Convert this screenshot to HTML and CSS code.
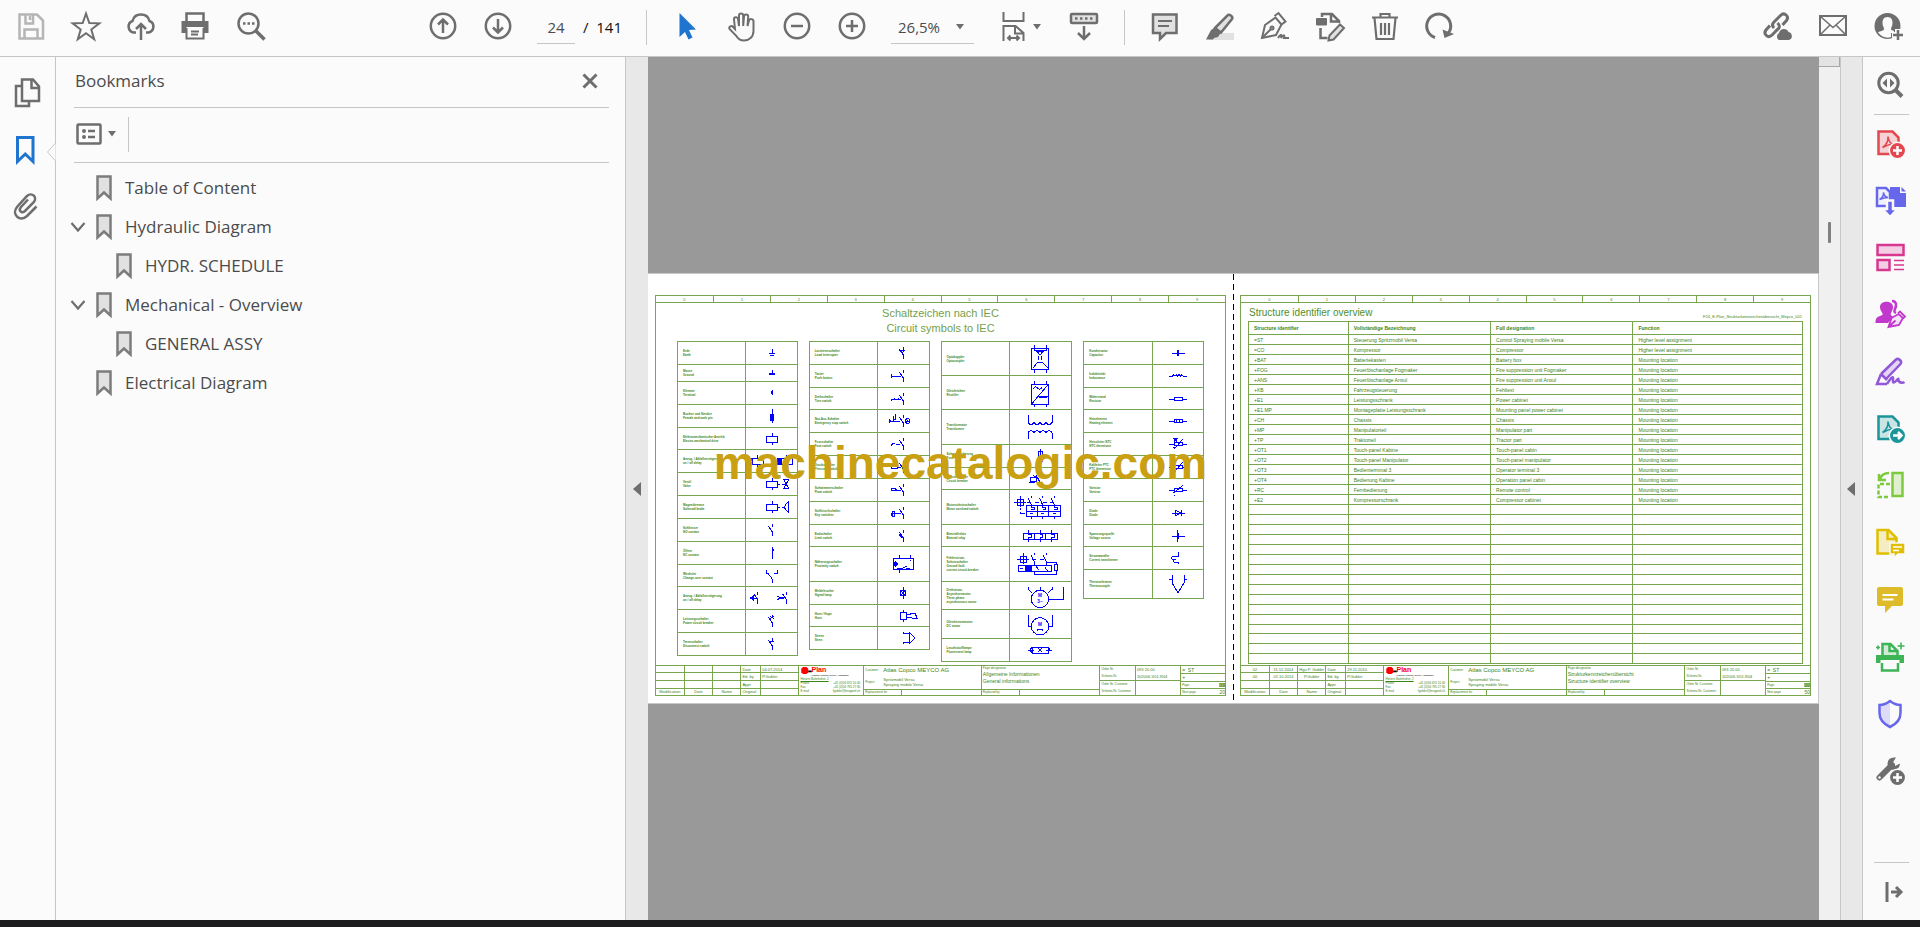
FILE: index.html
```html
<!DOCTYPE html>
<html lang="en">
<head>
<meta charset="utf-8">
<title>Document viewer</title>
<link rel="stylesheet" href="styles.css">
</head>
<body>
<svg class="defs" aria-hidden="true">
  <symbol id="bm" viewBox="0 0 16 26"><path d="M1.5 1.5h13v22l-6.500-6-6.500 6z" fill="#e1e1e1" stroke="#7c7c7c" stroke-width="2.500"/></symbol>
  <symbol id="chev" viewBox="0 0 16 12"><path d="M1.500 2l6.500 7.500L14.500 2" fill="none" stroke="#6e6e6e" stroke-width="2.200"/></symbol>
  <symbol id="caret" viewBox="0 0 8 6"><path d="M0 0h8L4 5.500z" fill="#6e6e6e"/></symbol>
  <g id="no"><path d="M0-17v9M-12-13L0 4v13"/></g>
</svg>

<header class="toolbar">
  <div class="group">
    <button class="tool dim" aria-label="Save"><svg class="ic" viewBox="0 0 30 30"><path d="M3.500 2.500h17.500l6 6V26.500H3.500z"/><path d="M9.500 3v8.500h7.500V3M8.500 26v-8.500h13V26"/><path d="M14 4v4"/></svg></button>
    <button class="tool" aria-label="Star"><svg class="ic thin" viewBox="0 0 30 30"><path d="M15 1.500l3.300 9.500 10 .3-8 6.200 2.900 9.700L15 21.300l-8.200 5.900 2.900-9.700-8-6.200 10-.3z"/></svg></button>
    <button class="tool" aria-label="Upload"><svg class="ic" viewBox="0 0 30 30"><path d="M10 20.500H7.500a6 6 0 0 1-1-11.500C7.500 5 10.500 2.500 15 2.500s7.500 2.500 8.500 6.500a6 6 0 0 1-1 11.500H20M15 28V12.500M10 17l5-5 5 5"/></svg></button>
    <button class="tool" aria-label="Print"><svg class="ic" viewBox="0 0 30 30"><path d="M5.500 9V1.500h17V9"/><path d="M.5 9h27v12h-5v-6h-17v6h-5z" fill="currentColor" stroke="none"/><path d="M5.500 16v10.500h17V16M10 19.500h8M10 22.500h7" stroke-width="2"/></svg></button>
    <button class="tool" aria-label="Find"><svg class="ic" viewBox="0 0 30 30"><circle cx="12.500" cy="11.500" r="10"/><path d="M20 19l8.500 8.500" stroke-width="3.500"/><path d="M7 11.500h2.500M11.500 11.500H14M16 11.500h2.500"/></svg></button>
  </div>
  <div class="group middle">
    <button class="tool" aria-label="Previous page"><svg class="ic" viewBox="0 0 30 30"><circle cx="15" cy="14" r="12.200"/><path d="M15 21V8M10 12.500l5-5 5 5"/></svg></button>
    <button class="tool" aria-label="Next page"><svg class="ic" viewBox="0 0 30 30"><circle cx="15" cy="14" r="12.200"/><path d="M15 7v13M10 15.500l5 5 5-5"/></svg></button>
    <div class="pager"><input class="page-no" type="text" value="24" aria-label="Page number"><span class="total">/&nbsp; 141</span></div>
    <span class="rule"></span>
    <button class="tool" aria-label="Select"><svg viewBox="0 0 30 30"><path d="M7.500 1v24l5.500-5 3.500 7.500 4-2L17 18l7-.5z" fill="#1f74cf"/></svg></button>
    <button class="tool" aria-label="Pan"><svg class="ic hand" viewBox="0 0 30 30"><path d="M8 17L7 7.500a2 2 0 0 1 4-.5l1 7V3.500a2 2 0 0 1 4.200 0V14l.8-9.500a2 2 0 0 1 4.200 0L20.500 14l1.500-5.500c.8-2 4.500-2 4.500 1V19c0 6-4.500 9.500-9.500 9.500-4 0-6-1.500-8-5L2.500 17c-1-2.500 2-4 3.500-2z"/></svg></button>
    <button class="tool" aria-label="Zoom out"><svg class="ic" viewBox="0 0 30 30"><circle cx="15" cy="14" r="12.200"/><path d="M9 14h12"/></svg></button>
    <button class="tool" aria-label="Zoom in"><svg class="ic" viewBox="0 0 30 30"><circle cx="15" cy="14" r="12.200"/><path d="M9 14h12M15 8v12"/></svg></button>
    <button class="zoom" aria-label="Zoom level">26,5%<svg class="caret"><use href="#caret"/></svg></button>
    <button class="tool fit" aria-label="Fit width"><svg class="ic" viewBox="0 0 30 30"><path d="M5.500 0v9h20V0M5.500 29V14h12l8 7v8M17 14.500v7h8M10 26h11M12.500 23.500L10 26l2.500 2.500M18.500 23.500L21 26l-2.500 2.500" stroke-width="2"/></svg><svg class="caret"><use href="#caret"/></svg></button>
    <button class="tool" aria-label="Scrolling"><svg class="ic" viewBox="0 0 30 30"><rect x="2" y="2" width="26" height="9" rx="1" fill="#e1e1e1"/><path d="M6 6.500h2.500M11 6.500h2.500M16 6.500h2.500M21 6.500h2.500"/><path d="M15 14v12.500M9 21l6 6 6-6"/></svg></button>
    <span class="rule"></span>
    <button class="tool" aria-label="Comment"><svg class="ic" viewBox="0 0 30 30"><path d="M3 2.500h23.500V21H16l-6 6v-6H3z" fill="#e1e1e1"/><path d="M8 9h14M8 14h11" stroke-width="2"/></svg></button>
    <button class="tool" aria-label="Highlight"><svg class="ic" viewBox="0 0 30 30"><path d="M10 21h19v7H4z" fill="#e1e1e1" stroke="none"/><path d="M10 16L22.500 3.500c1.500-2 6 1 4.500 3.500L16 20.500z" fill="#e1e1e1"/><path d="M6 18l4-2.500 6 5-3 4.500-4 1-1 1.500H1z" fill="currentColor" stroke="none"/></svg></button>
    <button class="tool" aria-label="Sign"><svg class="ic thin" viewBox="0 0 30 30"><path d="M2 26l3-13L15.500 5.500l6 7L16 23z"/><path d="M14.500 4l4-3 7 8.500-4 3M2 26l9-9"/><circle cx="12" cy="16" r="1.500"/><path d="M18 26c3-5 4-3 3 0 3-4 4-3 3 0h5"/></svg></button>
    <button class="tool" aria-label="Edit"><svg class="ic" viewBox="0 0 30 30"><path d="M7 5V2h10l7 7v2M16 2v7.500h8M5.500 16v10h7"/><rect x="1" y="6" width="11" height="7.500" rx="1" fill="currentColor" stroke="none"/><path d="M14.500 23.500L25 12.500l4 3.500-10.500 11.500-5 1z" fill="#e1e1e1" stroke-width="2"/></svg></button>
    <button class="tool" aria-label="Delete"><svg class="ic" viewBox="0 0 30 30"><path d="M2 5.500h26M10.500 5V2h9v3M4.500 6l2 21h17l2-21M11 11v12M15 11v12M19 11v12" stroke-width="2.200"/></svg></button>
    <button class="tool" aria-label="Rotate"><svg class="ic" viewBox="0 0 30 30"><path d="M10 25.500A12 12 0 1 1 23.500 21" stroke-width="3"/><path d="M17.500 17.500L29 22l-9.500 4z" fill="currentColor" stroke="none"/></svg></button>
  </div>
  <div class="group right">
    <button class="tool" aria-label="Share link"><svg class="ic" viewBox="0 0 30 30"><path d="M11 16c-3-3-1-5 0-6l6.500-6.500c4-4 9 1 6 5L19.500 13M14.500 11c3 3 2 5 0 6.500L9 23c-4 4-9-1-6-5l4-4.500" stroke-width="3"/><path d="M16 28a4 4 0 0 1 0-7c1-5 8-5 9.500-1 4 0 5 8 0 8z" fill="currentColor" stroke="none"/></svg></button>
    <button class="tool" aria-label="Mail"><svg class="ic thin" viewBox="0 0 30 30"><rect x="2" y="4" width="26" height="19"/><path d="M2.500 4.500L15 15.500 27.500 4.500M2.500 22.500L12 13M27.500 22.500L18 13" stroke-width="1.500"/></svg></button>
    <button class="tool" aria-label="Account"><svg class="ic" viewBox="0 0 30 30"><circle cx="14.500" cy="14" r="13" fill="currentColor" stroke="none"/><path d="M14.500 5c-4 0-5 3-5 6 0 3 1.500 4 1.500 6 0 2-4 2-6 3.500 4 5 9 6 13 4.500v-4h3v-2c-2-.5-3-1-3-2 0-2 1.500-3 1.500-6s-1-6-5-6z" fill="#fbfbfb" stroke="none"/><path d="M25 17v12M19 23h12" stroke="#fbfbfb" stroke-width="6"/><path d="M25 18v10M20 23h10"/></svg></button>
  </div>
</header>

<main class="work">
  <nav class="rail" aria-label="Panels">
    <button class="side" aria-label="Pages"><svg class="ic" viewBox="0 0 30 30"><path d="M9.500 8H4v20h13v-4"/><path d="M10 1.500h11l6 7v14.500H10zM19.500 2v8H27" fill="#fbfbfb"/></svg></button>
    <button class="side active" aria-label="Bookmarks"><svg class="ic bold" viewBox="0 0 30 30"><path d="M5.500 2.500H21v24l-7.750-7.500L5.500 26.500z"/></svg></button>
    <button class="side" aria-label="Attachments"><svg class="ic" viewBox="0 0 30 30"><path d="M24.500 14.500L15 24c-7 6.500-16-1.500-10-9L15 4c5-4.500 11 1.500 6.500 6.500L13 19c-3.500 3-7-.5-4-4l7-7.500"/></svg></button>
    <svg class="notch" viewBox="0 0 10 20"><path d="M9.500 0v1L1.500 10l8 9v1" fill="#fbfbfb" stroke="#c6c6c6"/></svg>
  </nav>

  <aside class="panel">
    <div class="panel-head"><h2>Bookmarks</h2><button class="close" aria-label="Close"><svg class="ic bold" viewBox="0 0 16 16"><path d="M1.500 1.500l13 13M14.500 1.500l-13 13"/></svg></button></div>
    <div class="panel-tools">
      <button class="options" aria-label="Options"><svg class="ic" viewBox="0 0 26 22"><rect x="1.500" y="1.500" width="23" height="19" rx="1"/><path d="M12 8h7M12 14h7"/><circle cx="8" cy="8" r="2" fill="currentColor" stroke="none"/><circle cx="8" cy="14" r="2" fill="currentColor" stroke="none"/></svg><svg class="caret"><use href="#caret"/></svg></button>
    </div>
    <ul class="tree">
      <li><span class="tw"></span><svg class="mark"><use href="#bm"/></svg><a href="#toc">Table of Content</a></li>
      <li><button class="tw" aria-label="Collapse"><svg><use href="#chev"/></svg></button><svg class="mark"><use href="#bm"/></svg><a href="#hyd">Hydraulic Diagram</a></li>
      <li class="child"><span class="tw"></span><svg class="mark"><use href="#bm"/></svg><a href="#sch">HYDR. SCHEDULE</a></li>
      <li><button class="tw" aria-label="Collapse"><svg><use href="#chev"/></svg></button><svg class="mark"><use href="#bm"/></svg><a href="#mech">Mechanical - Overview</a></li>
      <li class="child"><span class="tw"></span><svg class="mark"><use href="#bm"/></svg><a href="#assy">GENERAL ASSY</a></li>
      <li><span class="tw"></span><svg class="mark"><use href="#bm"/></svg><a href="#el">Electrical Diagram</a></li>
    </ul>
  </aside>

  <button class="gutter left" aria-label="Hide left pane"><svg viewBox="0 0 8 14"><path d="M8 0v14L0 7z"/></svg></button>

  <section class="canvas">
    <div class="spread">
      <article class="page">
        <div class="sheet">
          <ol class="ruler"><li>0</li><li>1</li><li>2</li><li>3</li><li>4</li><li>5</li><li>6</li><li>7</li><li>8</li><li>9</li></ol>
          <h1 class="caption">Schaltzeichen nach IEC<br>Circuit symbols to IEC</h1>
          <div class="tables">
            <table class="symbols a">
              <tr><td>Erde<br>Earth<td><svg class="s" viewBox="-72 -30 144 60"><path d="M0-13V0M-9 0H9M-6 7H6"/></svg>
              <tr class="h17"><td>Masse<br>Ground<td><svg class="s" viewBox="-72 -24 144 48"><path d="M0-10V4M-9 1H9M-9 4H9"/></svg>
              <tr><td>Klemme<br>Terminal<td><svg class="s" viewBox="-72 -30 144 60"><path d="M0-10V5"/><circle cy="-1" r="3"/></svg>
              <tr><td>Buchse und Stecker<br>Female and male pin<td><svg class="s" viewBox="-72 -30 144 60"><path d="M0-20V22"/><path class="f" d="M-5-4h10v16h-10z"/></svg>
              <tr class="h22"><td>Elektromechanischer Antrieb<br>Electro-mechanical drive<td><svg class="s" viewBox="-72 -30 144 60"><path d="M-17-9h34V10h-34zM0-19v10M0 10v9"/></svg>
              <tr><td>Anzug- / Abfallverzögerung<br>on / off delay<td><svg class="s" viewBox="-72 -30 144 60"><path d="M-58-7h32V10h-32zM-43-17v10M-43 10v9M-70-7h12V10h-12zl12 17M-58-7l-12 17M28-7h34V10h-34zM43-17v10M43 10v9"/><path class="f" d="M15-7h13V10h-13z"/></svg>
              <tr><td>Ventil<br>Valve<td><svg class="s" viewBox="-72 -30 144 60"><path d="M-17-9h34V10h-34zM0-19v10M0 10v9M17 0h8M30 0h8M35-13h15L35 13h15z"/></svg>
              <tr><td>Magnetbremse<br>Solenoid brake<td><svg class="s" viewBox="-72 -30 144 60"><path d="M-17-9h34V10h-34zM0-19v10M0 10v9M17 0h8M29 0h8M48-14q-20 14 0 28z"/></svg>
              <tr><td>Schliesser<br>NO contact<td><svg class="s" viewBox="-72 -30 144 60"><use href="#no"/></svg>
              <tr><td>Öffner<br>NC contact<td><svg class="s" viewBox="-72 -30 144 60"><path d="M0-18v9h6M4-12L0 4v15"/></svg>
              <tr class="h22"><td>Wechsler<br>Change-over contact<td><svg class="s" viewBox="-72 -30 144 60"><path d="M-17-18v9h9M-12-8L0 8v12M17-18v9H7"/></svg>
              <tr><td>Anzug- / Abfallverzögerung<br>on / off delay<td><svg class="s" viewBox="-72 -30 144 60"><use href="#no" x="-43"/><use href="#no" x="43"/><path d="M-66 0h18M-58-5v10M16-6l8 6-8 6M22-2h14M22 2h14"/><path class="f" d="M-64 0l8-6v12z"/></svg>
              <tr><td>Leistungsschalter<br>Power circuit breaker<td><svg class="s" viewBox="-72 -30 144 60"><use href="#no"/><path d="M-6-13l12 6M6-13l-12 6"/></svg>
              <tr><td>Trennschalter<br>Disconnect switch<td><svg class="s" viewBox="-72 -30 144 60"><use href="#no"/><path d="M-7-8H6"/></svg>
            </table>
            <table class="symbols b">
              <tr><td>Lasttrennschalter<br>Load interrupter<td><svg class="s" viewBox="-72 -30 144 60"><use href="#no"/><path d="M-10-8H5L-2 0z"/></svg>
              <tr><td>Taster<br>Push button<td><svg class="s" viewBox="-72 -30 144 60"><use href="#no"/><path d="M-36-7V7M-36 0h30"/></svg>
              <tr class="h22"><td>Drehschalter<br>Turn switch<td><svg class="s" viewBox="-72 -30 144 60"><use href="#no"/><path d="M-36 5V0h29M-26-3v6M-14-4v4"/></svg>
              <tr><td>Not-Aus-Schalter<br>Emergency stop switch<td><svg class="s" viewBox="-72 -30 144 60"><use href="#no"/><path d="M-42-7V7M-42 0h34M-38-4v8M-30 0v-14M-22-20v14h-8"/><circle cx="14" r="7"/><path d="M10 0h8M14-4v8"/></svg>
              <tr><td>Fussschalter<br>Foot switch<td><svg class="s" viewBox="-72 -30 144 60"><use href="#no"/><path d="M-36 4l5-5h8M-20 0h12M-26-4v5"/></svg>
              <tr><td>Druckschalter<br>Pressure switch<td><svg class="s" viewBox="-72 -30 144 60"><use href="#no"/><path d="M-36-4h18V5h-18zM-18 1h12"/></svg>
              <tr><td>Schwimmerschalter<br>Float switch<td><svg class="s" viewBox="-72 -30 144 60"><use href="#no"/><path d="M-36 0h30M-28-5q8 0 8 7h-16q0-7 8-7z"/></svg>
              <tr><td>Schlüsselschalter<br>Key switches<td><svg class="s" viewBox="-72 -30 144 60"><use href="#no"/><path d="M-36 9v-7h30M-26 9V-4h-6v13z"/></svg>
              <tr class="h22"><td>Endschalter<br>Limit switch<td><svg class="s" viewBox="-72 -30 144 60"><use href="#no"/><path d="M-12-4l8 8V-4"/></svg>
              <tr class="h35"><td>Näherungsschalter<br>Proximity switch<td><svg class="t" viewBox="-72 -45 144 90"><path d="M-30-17H30V16H-30zM-12-26v9M22-26v9M-12 16v10M-18 12H0l12-6M10 12h10M22-8v-4"/><path class="f" d="M-22-8l7 8-7 8-7-8z"/></svg>
              <tr><td>Meldeleuchte<br>Signal lamp<td><svg class="s" viewBox="-72 -30 144 60"><circle r="9"/><path d="M0-19V19M-6-6L6 6M6-6L-6 6"/></svg>
              <tr class="h22"><td>Horn / Hupe<br>Horn<td><svg class="s" viewBox="-72 -30 144 60"><path d="M-9-10H9V10H-9zM0-19v9M0 10v9M9-3l27-6 7 17L9 4"/></svg>
              <tr><td>Sirene<br>Siren<td><svg class="s" viewBox="-72 -30 144 60"><path d="M0-18v5h19M0 18v-5h19M19-17V17L35 0z"/></svg>
            </table>
            <table class="symbols c">
              <tr class="h34"><td>Optokoppler<br>Optocoupler<td><svg class="w t" viewBox="-90 -45 180 90"><path d="M-26-31H25V30H-26zM-17-43v18h36v-18M-17 43V30M19 43V30M-10-24h20L0-12zM-5-8v12M5-8v12M-20 26l12-16H8l14 16"/></svg>
              <tr class="h34"><td>Gleichrichter<br>Rectifier<td><svg class="w t" viewBox="-90 -45 180 90"><path d="M-26-26H25V34H-26zl0 60L25-26M-17-36v10M19-36v10M-17 43v-9M19 43v-9M-20-13q7-10 13-2t13-2M-6 10h30M-2 14h24"/></svg>
              <tr class="h35"><td>Transformator<br>Transformer<td><svg class="w t" viewBox="-90 -45 180 90"><path d="M-36-35v22q9 12 18 0 9 12 18 0 9 12 18 0 9 12 18 0v-22M-36 37V17q9-12 18 0 9-12 18 0 9-12 18 0 9-12 18 0v20"/></svg>
              <tr><td>Schmelzsicherung<br>Fuse<td><svg class="w s" viewBox="-90 -30 180 60"><path d="M-6-15H6V15H-6zM0-22V22"/></svg>
              <tr class="h22"><td>Schutzschalter<br>Circuit breaker<td><svg class="w s" viewBox="-90 -30 180 60"><path d="M-30-6h18v12h-18zM-8-4L0 10M-12-12l8 14M-34 10h20M-20-10L-4 0"/></svg>
              <tr class="h35"><td>Motorschutzschalter<br>Motor overload switch<td><svg class="w t" viewBox="-90 -45 180 90"><path d="M-41-6H60V29H-41zM-41 12H60M-8-6v35M25-6v35M-26-34v6M8-34v6M43-34v6M-36-28l10 22M-2-28L8-6M33-28L43-6M-26-6v6h8v8h-8M8-6v6h8v8H8M43-6v6h8v8h-8M-26 29v8M8 29v8M43 29v8M-30 20h8M4 20h8M39 20h8M-69-24h18v18h-18zM-78-15h36M-60-32V0M-38-15h12M-14-15h12M10-15h12M30-15h10M-60 4v6M-60 16v4h16"/></svg>
              <tr class="h22"><td>Bimetallrelais<br>Bimetal relay<td><svg class="w s" viewBox="-90 -30 180 60"><path d="M-51-9H51V9H-51zM-17-9V9M17-9V9M-35-19v15h8v8h-8v15M0-19v15h8v8H0v15M35-19v15h8v8h-8v15"/></svg>
              <tr class="h35"><td>Fehlerstrom-<br>Schutzschalter<br>Ground fault<br>current circuit-breaker<td><svg class="w t" viewBox="-90 -45 180 90"><path d="M-66 5H33V22H-66zM-18-34v6M18-34v6M-28-28L-18-8V5M8-28L18-8V5M18-4h30V2M43 2h10v16H43zM-18 22v10h66V18M-12 5l8 14M14 8l8 12M-60 14h10M-60-24h18v18h-18zM-69-15h36M-51-32V0M-24-15h12M0-15h12"/><path class="f" d="M-44 5h17v17h-17z"/></svg>
              <tr class="h28"><td>Drehstrom-<br>Asynchronmotor<br>Three-phase<br>asynchronous motor<td><svg class="w m" viewBox="-90 -39 180 78"><circle cy="9" r="26"/><path d="M-36-28v8l13 12M0-28v11M36-28v8L23-8M70-28V9H27"/><text y="4">M</text><text y="22">3~</text></svg>
              <tr class="h29"><td>Gleichstrommotor<br>DC motor<td><svg class="w m" viewBox="-90 -39 180 78"><circle cy="7" r="26"/><path d="M-36-28V7h10M36-28V7H26M-9 17H9M-9 20h4M5 20h4"/><text y="5">M</text></svg>
              <tr><td>Leuchtstofflampe<br>Fluorescent lamp<td><svg class="w s" viewBox="-90 -30 180 60"><path d="M-24-9h48v18h-48zM-36 0h18M18 0h18M-6-6L6 6M6-6L-6 6M-24-9q-8 9 0 18M24-9q8 9 0 18"/></svg>
            </table>
            <table class="symbols d">
              <tr><td>Kondensator<br>Capacitor<td><svg class="s" viewBox="-72 -30 144 60"><path d="M-18 0H20M-2-9V9M1-9V9"/></svg>
              <tr><td>Induktivität<br>Inductance<td><svg class="s" viewBox="-72 -30 144 60"><path d="M-27 0h10l4-4 4 4 4-4 4 4 4-4 4 4 4-4 4 4h11"/></svg>
              <tr class="h22"><td>Widerstand<br>Resistor<td><svg class="s" viewBox="-72 -30 144 60"><path d="M-27 0h15M12 0h15M-12-4h24v8h-24z"/></svg>
              <tr><td>Heizelement<br>Heating element<td><svg class="s" viewBox="-72 -30 144 60"><path d="M-27 0h15M12 0h15M-12-5h24V5h-24zM-5-5V5M4-5V5"/></svg>
              <tr><td>Heissleiter NTC<br>NTC thermistor<td><svg class="s" viewBox="-72 -30 144 60"><path d="M-27 0h15M12 0h15M-12-5h24V5h-24zM-10 14l24-28M-14-17H0M-12-17v10l8-8v8M-16 10h8"/></svg>
              <tr><td>Kaltleiter PTC<br>PTC thermistor<td><svg class="s" viewBox="-72 -30 144 60"><path d="M-27 0h15M12 0h15M-12-5h24V5h-24zM-10 14l24-28M-14 14h8"/></svg>
              <tr><td>Varistor<br>Varistor<td><svg class="s" viewBox="-72 -30 144 60"><path d="M-27 0h15M12 0h15M-12-5h24V5h-24zM-14 9L14-13M-11 14v4"/></svg>
              <tr><td>Diode<br>Diode<td><svg class="s" viewBox="-72 -30 144 60"><path d="M-18 0H20M-8-9L8 0-8 9zM9-9V9"/></svg>
              <tr class="h22"><td>Spannungsquelle<br>Voltage source<td><svg class="s" viewBox="-72 -30 144 60"><path d="M-18 0H20M-2-18V18M2-8V8"/></svg>
              <tr><td>Stromwandler<br>Current transformer<td><svg class="s" viewBox="-72 -30 144 60"><path d="M2-17v12h-18q-8 6 0 10h6q-8 5 0 8H2v5"/></svg>
              <tr class="h29"><td>Thermoelement<br>Thermocouple<td><svg class="m" viewBox="-72 -39 144 78"><path d="M-18-26v23L0 26 18-3v-23M-27-14h9M18-14h9"/></svg>
            </table>
          </div>
          <footer class="block">
            <table class="revs">
              <tr><td><td><td><td class="l">Date<td class="l">04.07.2014
              <tr><td><td><td><td class="l">Ed. by<td class="l">P.Gubler
              <tr><td><td><td><td class="l">Appr<td>
              <tr><td>Modification<td>Date<td>Name<td class="l">Original<td>
            </table>
            <div class="logo"><svg viewBox="0 0 12 8"><path d="M2 0h4l2 2v4L6 8H2L0 6V2z" fill="#f00"/><path d="M8 5h4" stroke="#000" stroke-width="2"/></svg><b>Plan</b><i>Planung, Prüfung, Service, Automation</i><p><u>Hintere Bahnhofstr. 2</u></p><p><span>Phone</span><span>+41 (0)56 670 10 40</span></p><p><span>Fax</span><span>+41 (0)56 795 27 80</span></p><p><span>E-mail</span><span>fgubler@brugweil.ch</span></p></div>
            <div class="job"><div class="job-main"><span>Customer</span><b>Atlas Copco MEYCO AG</b><span>Project</span><em>Spritzmobil Versa<br>Spraying mobile Versa</em></div><div class="foot"><span>Replacement for</span><span></span></div></div>
            <div class="job"><div class="desc"><span>Page designation</span><strong>Allgemeine Informationen<br>General informations</strong></div><div class="foot"><span>Replaced by</span><span></span></div></div>
            <div class="orders"><div>Order Nr.<br>Schema Nr.</div><div class="num">093 20 00<br>102006-V01-R04</div><div>Order Nr. Customer<br>Schema Nr. Customer</div><div></div></div>
            <div class="sheetno"><div class="num">=&nbsp; ST</div><div class="num">+</div><div><span>Page</span><b class="num hit">19</b></div><div><span>Next page</span><b class="num">20</b></div></div>
          </footer>
        </div>
      </article>

      <article class="page second">
        <div class="sheet">
          <ol class="ruler"><li>0</li><li>1</li><li>2</li><li>3</li><li>4</li><li>5</li><li>6</li><li>7</li><li>8</li><li>9</li></ol>
          <div class="overview-head"><h1>Structure identifier overview</h1><span>F24_E-Plan_Strukturkennzeichenübersicht_Meyco_001</span></div>
          <table class="overview">
            <thead><tr><th>Structure identifier<th>Vollständige Bezeichnung<th>Full designation<th>Function</thead>
            <tbody>
              <tr><td>=ST<td>Steuerung Spritzmobil Versa<td>Control Spraying mobile Versa<td>Higher level assignment
              <tr><td>=CO<td>Kompressor<td>Compressor<td>Higher level assignment
              <tr><td>+BAT<td>Batteriekasten<td>Battery box<td>Mounting location
              <tr><td>+FOG<td>Feuerlöschanlage Fogmaker<td>Fire suppression unit Fogmaker<td>Mounting location
              <tr><td>+ANS<td>Feuerlöschanlage Ansul<td>Fire suppression unit Ansul<td>Mounting location
              <tr><td>+KB<td>Fahrzeugsteuerung<td>Fehltext<td>Mounting location
              <tr><td>+E1<td>Leistungsschrank<td>Power cabinet<td>Mounting location
              <tr><td>+E1.MP<td>Montageplatte Leistungsschrank<td>Mounting panel power cabinet<td>Mounting location
              <tr><td>+CH<td>Chassis<td>Chassis<td>Mounting location
              <tr><td>+MP<td>Manipulatorteil<td>Manipulator part<td>Mounting location
              <tr><td>+TP<td>Traktorteil<td>Tractor part<td>Mounting location
              <tr><td>+OT1<td>Touch-panel Kabine<td>Touch-panel cabin<td>Mounting location
              <tr><td>+OT2<td>Touch-panel Manipulator<td>Touch-panel manipulator<td>Mounting location
              <tr><td>+OT3<td>Bedienterminal 3<td>Operator terminal 3<td>Mounting location
              <tr><td>+OT4<td>Bedienung Kabine<td>Operation panel cabin<td>Mounting location
              <tr><td>+RC<td>Fernbedienung<td>Remote control<td>Mounting location
              <tr><td>+E2<td>Kompressorschrank<td>Compressor cabinet<td>Mounting location
              <tr><td><td><td><td><tr><td><td><td><td><tr><td><td><td><td><tr><td><td><td><td>
              <tr><td><td><td><td><tr><td><td><td><td><tr><td><td><td><td><tr><td><td><td><td>
              <tr><td><td><td><td><tr><td><td><td><td><tr><td><td><td><td><tr><td><td><td><td>
              <tr class="h9"><td><td><td><td><tr><td><td><td><td><tr><td><td><td><td><tr><td><td><td><td>
            </tbody>
          </table>
          <footer class="block">
            <table class="revs">
              <tr><td>02<td>11.12.2014<td>Hgu P. Gubler<td class="l">Date<td class="l">29.11.2010
              <tr><td>00<td>01.10.2014<td>P.Gubler<td class="l">Ed. by<td class="l">P.Gubler
              <tr><td><td><td><td class="l">Appr<td>
              <tr><td>Modification<td>Date<td>Name<td class="l">Original<td>
            </table>
            <div class="logo"><svg viewBox="0 0 12 8"><path d="M2 0h4l2 2v4L6 8H2L0 6V2z" fill="#f00"/><path d="M8 5h4" stroke="#000" stroke-width="2"/></svg><b>Plan</b><i>Planung, Prüfung, Service, Automation</i><p><u>Hintere Bahnhofstr. 2</u></p><p><span>Phone</span><span>+41 (0)56 670 10 40</span></p><p><span>Fax</span><span>+41 (0)56 795 27 80</span></p><p><span>E-mail</span><span>fgubler@brugweil.ch</span></p></div>
            <div class="job"><div class="job-main"><span>Customer</span><b>Atlas Copco MEYCO AG</b><span>Project</span><em>Spritzmobil Versa<br>Spraying mobile Versa</em></div><div class="foot"><span>Replacement for</span><span></span></div></div>
            <div class="job"><div class="desc"><span>Page designation</span><strong>Strukturkennzeichenübersicht<br>Structure identifier overview</strong></div><div class="foot"><span>Replaced by</span><span></span></div></div>
            <div class="orders"><div>Order Nr.<br>Schema Nr.</div><div class="num">093 20 00<br>102006-V01-R04</div><div>Order Nr. Customer<br>Schema Nr. Customer</div><div></div></div>
            <div class="sheetno"><div class="num">=&nbsp; ST</div><div class="num">+</div><div><span>Page</span><b class="num hit">20</b></div><div><span>Next page</span><b class="num">50</b></div></div>
          </footer>
        </div>
      </article>
      <div class="watermark">machinecatalogic.com</div>
    </div>
  </section>

  <div class="scroll"><div class="thumb"></div><div class="grip"></div></div>
  <button class="gutter end" aria-label="Hide right pane"><svg viewBox="0 0 8 14"><path d="M8 0v14L0 7z"/></svg></button>

  <nav class="rail tools" aria-label="Tools">
    <button class="side" aria-label="Search tools"><svg class="ic bold" viewBox="0 0 30 30"><circle cx="12.500" cy="12" r="9.700"/><path d="M19.500 19l6.500 6.500" stroke-width="4"/><path d="M11 7.500v9L6.500 12zM14 7.500v9l4.500-4.500z" fill="currentColor" stroke="none"/></svg></button>
    <hr>
    <button class="side red" aria-label="Create PDF"><svg class="ic" viewBox="0 0 30 30"><path class="tint" d="M2.500 2.500h14l6 6V25h-20z"/><path d="M6.500 18.500q6-4 5.500-11 1 8 6.500 7.500-6 0-12 3.500" stroke-width="1.600"/><circle cx="21.500" cy="21.500" r="8.200" fill="currentColor" stroke="#fafafa" stroke-width="1.500"/><path d="M21.500 17v9M17 21.500h9" stroke="#fff"/></svg></button>
    <button class="side blue" aria-label="Export PDF"><svg class="ic" viewBox="0 0 30 30"><path d="M14 1h10v6h6v14H14z" fill="currentColor" stroke="none"/><path d="M25.500 1l4.500 4.500h-4.500z" fill="currentColor" stroke="none"/><path d="M1 2h9l4 4v14H1z" fill="#f0f0ff"/><path d="M3.500 13.500q4-2 4-7 1 5 4.500 5-4 0-8.500 2" stroke-width="1.500"/><path d="M11 14.500h6V23h4.500L14 31l-7.500-8H11z" fill="currentColor" stroke="#fafafa"/></svg></button>
    <button class="side pink" aria-label="Organize pages"><svg class="ic" viewBox="0 0 30 30"><rect class="tint" x="1.500" y="2" width="26" height="10"/><rect class="tint" x="1.500" y="17" width="12" height="10"/><path d="M18 17.500h10M18 22h10M18 26.500h10" stroke-width="1.500"/></svg></button>
    <button class="side magenta" aria-label="Request signatures"><svg class="ic" viewBox="0 0 30 30"><path d="M4 7c0-7 13-7 13 0 0 4-3 6-2 8l2 2-5 6H-.5c0-5 1-6 7-8 1-2-2.500-4-2.500-8z" fill="currentColor" stroke="none"/><path d="M16 1c5 0 4.500 5 3 8-1 2-1 3 1 4" stroke-width="2.500"/><path d="M12.500 27l3-9 7-4 4.500 4-4 7zM12.500 27l7-6.500M22 13.500l2-2 5 5-2 2" stroke-width="1.800" fill="#f7e0fb"/></svg></button>
    <button class="side violet" aria-label="Fill and sign"><svg class="ic" viewBox="0 0 30 30"><path class="tint" d="M5 17L20 2.500q2-1.500 4 .5t.5 4L10 22"/><path d="M5 17L1 27h10M5 17l6 6" /><path d="M11 27q7-11 6-4-.5 5 4 0 2-3 1.500 1 3 3 6 1"/></svg></button>
    <button class="side teal" aria-label="Send PDF"><svg class="ic" viewBox="0 0 30 30"><path class="tint" d="M2.500 2.500h14l6 6V25h-20z"/><path d="M6.500 18.500q6-4 5.500-11 1 8 6.500 7.500-6 0-12 3.500" stroke-width="1.600"/><circle cx="21.500" cy="21.500" r="8.200" fill="currentColor" stroke="#fafafa" stroke-width="1.500"/><path d="M17 21.500h8M22 18l3.500 3.500L22 25" stroke="#fff"/></svg></button>
    <button class="side lime" aria-label="Compare files"><svg class="ic" viewBox="0 0 30 30"><rect class="tint" x="16.500" y="2" width="10" height="23"/><path d="M14 13H2.500v13H14" stroke-dasharray="4 2"/><path d="M13 2q-7 0-9 6M3 3v6h7"/></svg></button>
    <button class="side gold" aria-label="PDF comments"><svg class="ic" viewBox="0 0 30 30"><path class="tint" d="M1.500 2h11l8 8v15.500h-19z"/><path d="M11.500 2.500V11h9"/><path d="M14 15h15v11h-7l-4 4v-4h-4z" fill="currentColor" stroke="#fafafa" stroke-width="1.500"/><path d="M17 19h9M17 22.500h6" stroke="#fff" stroke-width="1.500"/></svg></button>
    <button class="side gold2" aria-label="Comment"><svg class="ic" viewBox="0 0 30 30"><path d="M1 4q0-2 2-2h22q2 0 2 2v15q0 2-2 2H16l-7 7v-7H3q-2 0-2-2z" fill="currentColor" stroke="none"/><path d="M6.500 10h15M6.500 14.500h11" stroke="#fff" stroke-width="2"/></svg></button>
    <button class="side green" aria-label="Scan and print"><svg class="ic" viewBox="0 0 30 30"><path class="tint" d="M6.500 14V2h8l7 7v5M13.500 2v7h8"/><path d="M0 13h28v8h-4.500v-3h-19v3H0z" fill="currentColor" stroke="none"/><path d="M6 21v7.500h16V21"/><path d="M25 .5v7M21.500 4h7M2 3.500v4M0 5.500h4" stroke-width="1.500"/></svg></button>
    <button class="side blue" aria-label="Protect"><svg class="ic" viewBox="0 0 30 30"><path d="M14 2.500v25.500Q3.500 22 3.500 13V6Q9 6 14 2.500z" fill="#dcdcf8" stroke="none"/><path d="M14 2q5 4 10.500 4v8q0 9-10.500 14Q3.500 23 3.500 14V6Q9 6 14 2z"/></svg></button>
    <button class="side" aria-label="More tools"><svg class="ic" viewBox="0 0 30 30"><path d="M3.500 21.500L16 9" stroke-width="6" stroke-linecap="round"/><path d="M20 1.500q-8-1-8.500 6 0 6 6 6.500 6 0 6.500-6.500l-5 2.500-2.500-3z" fill="currentColor" stroke="none"/><circle cx="3.500" cy="21.500" r="1.200" fill="#fff" stroke="none"/><circle cx="21.500" cy="21.500" r="8.200" fill="currentColor" stroke="#fafafa" stroke-width="1.500"/><path d="M21.500 17v9M17 21.500h9" stroke="#fff"/></svg></button>
    <hr class="last">
    <button class="side" aria-label="Expand pane"><svg class="ic bold" viewBox="0 0 30 30"><path d="M11 5v20M15 15h9M20 10l5 5-5 5"/></svg></button>
  </nav>
</main>
<div class="taskbar"></div>
</body>
</html>
```

FILE: styles.css
```css
* { box-sizing: border-box; }
body {
  margin: 0;
  height: 100vh;
  display: flex;
  flex-direction: column;
  overflow: hidden;
  background: #fbfbfb;
  color: #4b4b4b;
  font-family: "Open Sans", "Noto Sans", sans-serif;
  font-size: 17px;
}
button { border: 0; padding: 0; background: none; color: inherit; font: inherit; display: flex; align-items: center; justify-content: center; }
h1, h2, ol, ul, p { margin: 0; padding: 0; font-weight: 400; list-style: none; }
.defs { position: absolute; width: 0; height: 0; }
.ic { fill: none; stroke: currentColor; stroke-width: 2.5; overflow: visible; }
.ic.thin, .ic.hand { stroke-width: 2; }
.ic.bold { stroke-width: 3; }
.caret { width: 8px; height: 6px; }

/* toolbar */
.toolbar { flex: none; display: flex; height: 57px; border-bottom: 1px solid #c6c6c6; padding: 0 5px 2px 3px; color: #6e6e6e; }
.group { display: flex; align-items: center; }
.middle { margin-left: 137px; }
.right { margin-left: auto; }
.tool { width: 55px; height: 54px; }
.tool svg:first-child { width: 30px; height: 30px; flex: none; }
.dim { color: #b5b5b5; }
.rule { width: 1px; height: 35px; background: #c6c6c6; }
.pager { display: flex; align-items: center; gap: 8px; width: 121px; padding-left: 12px; color: #111; font-size: 15px; }
.page-no { width: 38px; height: 34px; border: 0; border-bottom: 1px solid #c6c6c6; background: none; padding: 0; text-align: center; font: inherit; color: #4b4b4b; }
.total { font-weight: 500; white-space: nowrap; }
.rule + .tool { margin-left: 12px; }
.zoom { width: 83px; height: 34px; margin-left: 12px; padding: 0 10px 0 7px; justify-content: space-between; border-bottom: 1px solid #c6c6c6; font-size: 15px; color: #4b4b4b; }
.fit { width: 68px; margin: 0 0 0 24px; justify-content: flex-start; gap: 5px; }
.fit + .tool { margin-right: 13px; margin-left: -10px; }

/* work area */
.work { flex: 1; min-height: 0; display: flex; }
.rail { position: relative; flex: 0 0 56px; border-right: 1px solid #c6c6c6; padding-top: 7px; color: #6e6e6e; }
.side { width: 100%; height: 57px; }
.side svg { width: 30px; height: 30px; }
.rail:not(.tools) .side { justify-content: flex-start; padding-left: 12px; }
.active { color: #1f74cf; }
.notch { position: absolute; right: -1px; top: 85px; width: 10px; height: 20px; }
.tools { display: flex; flex-direction: column; align-items: center; flex-basis: 58px; padding: 0 1px 0 0; border: 0; border-left: 1px solid #c6c6c6; background: #fafafa; }
.tools .side { flex: none; }
.tools hr { width: 35px; height: 1px; flex: none; margin: 0; border: 0; background: #c6c6c6; }
.tools .last { margin-top: auto; }
.tint { fill: currentColor; fill-opacity: .22; }
.red { color: #e34850; }
.blue { color: #6767ec; }
.pink { color: #d83790; }
.magenta { color: #c038cc; }
.violet { color: #9256d9; }
.teal { color: #1b959a; }
.lime { color: #7dcb3c; }
.gold { color: #dfbf00; }
.gold2 { color: #ddbb2a; }
.green { color: #3db456; }

.panel { flex: 0 0 570px; border-right: 1px solid #c6c6c6; padding: 0 16px 0 18px; }
.panel-head { display: flex; align-items: center; justify-content: space-between; height: 51px; border-bottom: 1px solid #c6c6c6; padding: 0 11px 3px 1px; }
.panel-head h2 { font-size: 17px; }
.close { color: #6e6e6e; }
.close svg { width: 16px; height: 16px; }
.panel-tools { display: flex; align-items: center; height: 55px; border-bottom: 1px solid #c6c6c6; padding-bottom: 2px; }
.options { height: 35px; gap: 6px; padding: 0 12px 0 2px; border-right: 1px solid #c6c6c6; color: #6e6e6e; }
.options .ic { width: 26px; height: 22px; }
.tree { padding-top: 5px; }
.tree li { display: flex; align-items: center; height: 39px; }
.tree .child { padding-left: 20px; }
.tree a { color: inherit; text-decoration: none; margin-left: 13px; }
.tw { flex: none; width: 22px; height: 39px; margin-left: -4px; justify-content: flex-start; }
.tw svg { width: 16px; height: 12px; }
.tree .mark { width: 16px; height: 26px; margin-left: 4px; }

.gutter { flex: none; width: 22px; background: #e8e8e8; }
.gutter svg { width: 8px; height: 14px; fill: #6e6e6e; }
.gutter.end { border-left: 1px solid #c6c6c6; padding-right: 2px; }
.canvas { flex: 1; min-width: 0; display: flex; align-items: center; background: #999; }
.scroll { flex: 0 0 21px; display: flex; flex-direction: column; align-items: center; gap: 155px; background: #f0f0f0; }
.thumb { width: 100%; height: 10px; background: #e3e3e3; border: solid #a8a8a8; border-width: 0 1px 1px 0; }
.grip { width: 3px; height: 21px; border-radius: 1px; background: #808080; }
.taskbar { flex: none; height: 7px; background: #1c1c1e; }

/* drawing sheets */
.spread { position: relative; flex: 1; display: flex; background: #fff; border: solid #c8c8c8; border-width: 1px 1px 1px 0; font-family: "Liberation Sans", Arial, sans-serif; color: #3c8412; }
.page { flex: 1 1 0; min-width: 0; padding: 21px 7px 7px; }
.second { background: repeating-linear-gradient(#000 0 6px, #fff 6px 10px) left / 1px 100% no-repeat; }
.sheet { display: flex; flex-direction: column; height: 401px; border: 1px solid #77a64f; }
.ruler { flex: none; display: grid; grid-template-columns: repeat(10, 1fr); height: 7px; border-bottom: 1px solid #77a64f; font-size: 4px; line-height: 7px; text-align: center; }
.ruler li + li { border-left: 1px solid #77a64f; }
.caption { padding: 3px 0 5px; text-align: center; font-size: 11px; line-height: 15px; color: #74a04c; }
.tables { display: flex; align-items: flex-start; gap: 11px; padding: 0 21px; }
table { border-collapse: collapse; table-layout: fixed; }
td, th { padding: 0; }
.symbols { flex: 121 1 0; font-size: 3px; line-height: 4px; font-weight: 700; }
.symbols.c { flex-grow: 132; }
.symbols td { height: 23px; border: 1px solid #77a64f; white-space: nowrap; }
.symbols td:first-child { width: 57%; padding-left: 5px; }
.symbols.c td:first-child { width: 52%; }
.symbols .h17 td { height: 17px; }
.symbols .h22 td { height: 22px; }
.symbols .h28 td { height: 28px; }
.symbols .h29 td { height: 29px; }
.symbols .h34 td { height: 34px; }
.symbols .h35 td { height: 35px; }
.symbols svg { display: block; margin: 0 auto; width: 48px; height: 20px; fill: none; stroke: #00f; stroke-width: 3; shape-rendering: crispEdges; }
.symbols svg.w { width: 60px; }
.symbols svg.t { height: 30px; }
.symbols svg.m { height: 26px; }
.symbols .h17 svg { height: 16px; }
.symbols .f { fill: #00f; }
.symbols text { fill: #00f; stroke: none; font-size: 14px; font-weight: 700; text-anchor: middle; }

.overview-head { display: flex; justify-content: space-between; height: 18px; padding: 0 8px; font-size: 4px; }
.overview-head h1 { font-size: 10px; line-height: 20px; color: #4f8f2a; }
.overview-head span { align-self: flex-end; line-height: 8px; }
.overview { width: calc(100% - 14px); margin: 0 7px; font-size: 5px; line-height: 6px; }
.overview td, .overview th { height: 10px; padding-left: 5px; border: 1px solid #77a64f; text-align: left; }
.overview th { height: 13px; }
.overview th:nth-child(1) { width: 18%; }
.overview th:nth-child(2), .overview th:nth-child(3) { width: 25.7%; }
.overview .h9 td { height: 9px; }

.block { display: grid; grid-template-columns: 142fr 66fr 118fr 119fr 81fr 45fr; height: 30px; margin-top: auto; border-top: 1px solid #77a64f; font-size: 3px; line-height: 4px; white-space: nowrap; }
.block > * { min-width: 0; }
.block > * + * { border-left: 1px solid #77a64f; }
.revs { width: 100%; height: 100%; font-size: 4px; line-height: 5px; text-align: center; }
.revs td { border-bottom: 1px solid #77a64f; border-right: 1px solid #77a64f; width: 20%; }
.revs td:nth-child(4) { width: 14%; }
.revs td:last-child { width: 26%; border-right: 0; }
.revs tr:last-child td { border-bottom: 0; }
.revs .l { text-align: left; padding-left: 1px; }
.logo { padding: 1px 3px 0 2px; display: grid; grid-template-columns: 11px 1fr; grid-auto-rows: min-content; }
.logo svg { width: 11px; height: 7px; grid-row: span 2; }
.logo b { font-size: 7px; line-height: 6px; color: #f00; }
.logo i { color: #333; font-size: 2px; font-style: normal; font-weight: 700; line-height: 4px; }
.logo p { grid-column: 1 / -1; display: flex; justify-content: space-between; line-height: 4px; }
.job { display: flex; flex-direction: column; }
.job-main { flex: 1; display: grid; grid-template-columns: 18px 1fr; grid-template-rows: 8px 1fr; padding-left: 1px; align-items: center; }
.job b { font-size: 6px; font-weight: 400; }
.job em { font-size: 4px; line-height: 5px; font-style: normal; }
.desc { flex: 1; padding-left: 1px; }
.desc span { display: block; line-height: 5px; }
.job strong { display: block; font-size: 5px; line-height: 7px; font-weight: 400; }
.foot { height: 6px; display: grid; grid-template-columns: 36px 1fr; border-top: 1px solid #77a64f; padding-left: 1px; }
.foot span + span { border-left: 1px solid #77a64f; }
.orders { display: grid; grid-template: 14px 1fr / 35fr 46fr; line-height: 7px; }
.orders div { padding-left: 1px; }
.orders div:nth-child(even) { border-left: 1px solid #77a64f; }
.orders div:nth-child(n+3) { border-top: 1px solid #77a64f; }
.num { font-size: 4px; font-weight: 400; }
.sheetno { display: grid; grid-template-rows: repeat(4, 1fr); }
.sheetno div { display: flex; align-items: center; justify-content: space-between; padding-left: 1px; }
.sheetno div.num { justify-content: flex-start; }
.sheetno div + div { border-top: 1px solid #77a64f; }
.sheetno .num { font-size: 5px; }
.hit { background: #9cc07c; }
.watermark { position: absolute; left: 0; width: 50%; top: 161px; padding-left: 40px; text-align: center; font-size: 46px; line-height: 56px; font-weight: 700; color: #c9a012; }
```
